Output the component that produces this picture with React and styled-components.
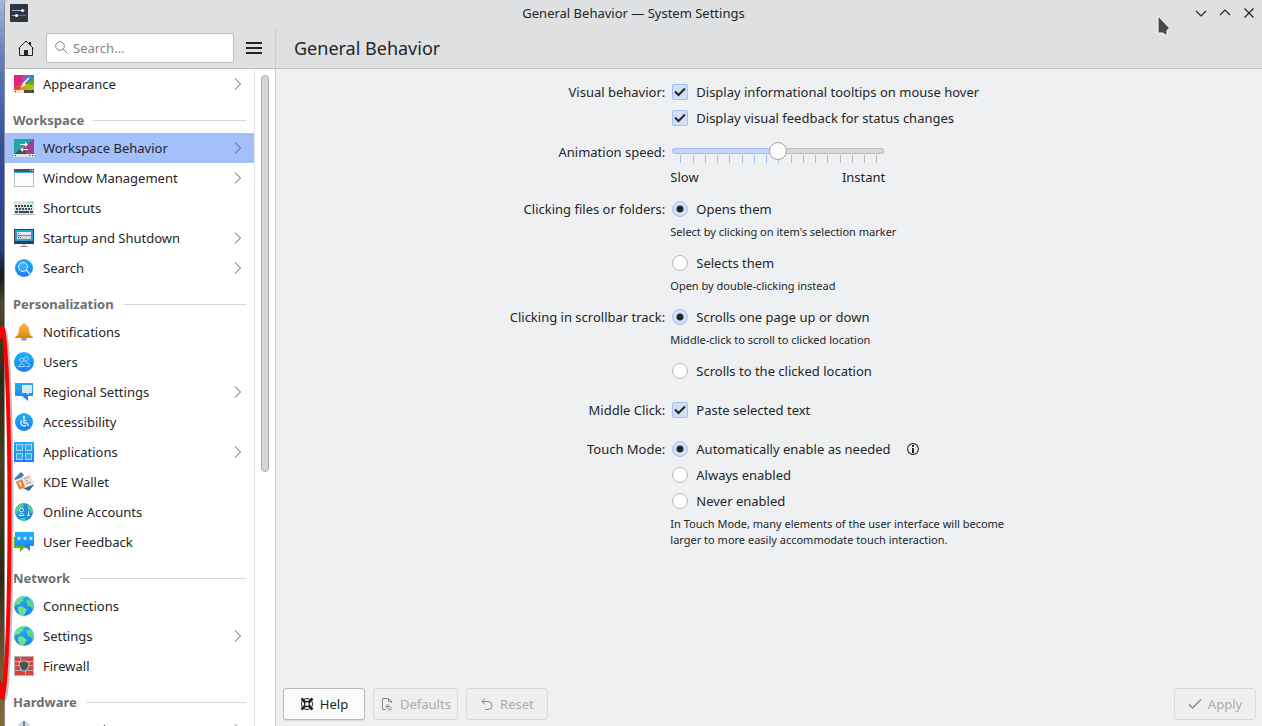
import React, { useState } from 'react'
import styled, { createGlobalStyle } from 'styled-components'

const sections = [
  {
    title: '',
    items: [{ name: 'Appearance', icon: 'appearance', arrow: true }],
  },
  {
    title: 'Workspace',
    items: [
      { name: 'Workspace Behavior', icon: 'behavior', arrow: true },
      { name: 'Window Management', icon: 'windows', arrow: true },
      { name: 'Shortcuts', icon: 'keyboard' },
      { name: 'Startup and Shutdown', icon: 'startup', arrow: true },
      { name: 'Search', icon: 'search', arrow: true },
    ],
  },
  {
    title: 'Personalization',
    items: [
      { name: 'Notifications', icon: 'bell' },
      { name: 'Users', icon: 'users' },
      { name: 'Regional Settings', icon: 'region', arrow: true },
      { name: 'Accessibility', icon: 'access' },
      { name: 'Applications', icon: 'apps', arrow: true },
      { name: 'KDE Wallet', icon: 'wallet' },
      { name: 'Online Accounts', icon: 'online' },
      { name: 'User Feedback', icon: 'feedback' },
    ],
  },
  {
    title: 'Network',
    items: [
      { name: 'Connections', icon: 'globe' },
      { name: 'Settings', icon: 'globe', arrow: true },
      { name: 'Firewall', icon: 'firewall' },
    ],
  },
  {
    title: 'Hardware',
    items: [{ name: 'Input Devices', icon: 'input', arrow: true }],
  },
]

const icons = {
  appearance: (
    <>
      <rect x="1" y="2" width="20" height="16" fill="#e8452f" />
      <path d="M1 2H11L9 10L1 14Z" fill="#e6207c" />
      <path d="M11 2H14L10 11L8 8Z" fill="#9b4fc4" />
      <path d="M14 2H21V6L11 11Z" fill="#3f86bd" />
      <path d="M21 6V12L10 12Z" fill="#4fae3a" />
      <path d="M21 12V18H13L10 11Z" fill="#b5bd10" />
      <path d="M13 18H6L10 11Z" fill="#f08a1c" />
      <path d="M16 5L11 10" stroke="#fff" strokeWidth="1.5" />
      <path d="M11 9L12.5 11C11 14 9 14 7.500 14.5C9 13 8.5 11 11 9Z" fill="#fff" />
      <rect x="1" y="17" width="10" height="3" fill="#fbe3d3" />
      <rect x="11" y="17" width="10" height="3" fill="#4a4f35" />
      <path d="M2 18h1v1H2zM19 18h1v1h-1z" fill="#222" />
    </>
  ),
  behavior: (
    <>
      <rect x="1" y="2" width="20" height="16" fill="#1fa6a8" />
      <path d="M21 2V18H13L9 12Z" fill="#b23a78" />
      <path d="M21 2L12 9L17 18H21Z" fill="#9a4585" />
      <path d="M1 18L9 10L14 18Z" fill="#2f5560" />
      <rect x="1" y="17" width="20" height="3" fill="#dfe3e5" />
      <path d="M2 18h1v1H2zM16 18h1v1h-1zM19 18h1v1h-1z" fill="#333" />
      <path d="M7 7.500H14M9 12.500H15" stroke="#fff" />
      <path d="M12 5L15 7.500L12 10ZM10 10L7 12.500L10 15Z" fill="#fff" />
    </>
  ),
  windows: (
    <>
      <rect x="1.500" y="3.500" width="19" height="16" fill="#fcfcfc" stroke="#b8bec2" />
      <rect x="1" y="2" width="20" height="3" fill="#4a5560" />
      <rect x="1" y="5" width="20" height="1" fill="#3daee9" />
      <path d="M17 3h1v1h-1zM19 3h1v1h-1z" fill="#fff" />
    </>
  ),
  keyboard: (
    <>
      <rect x="1" y="4" width="20" height="14" fill="#dfe3e5" />
      <rect x="1" y="17" width="20" height="1" fill="#a9b1b5" />
      <path d="M15 5.500h5" stroke="#2ecc71" strokeDasharray="1 1" />
      <path d="M2 9h18" stroke="#3b4750" strokeWidth="2" strokeDasharray="2 1" />
      <path d="M3 12h16" stroke="#3b4750" strokeWidth="2" strokeDasharray="2 1" />
      <path d="M2 15h3M6 15h10M17 15h3" stroke="#3b4750" strokeWidth="2" />
    </>
  ),
  startup: (
    <>
      <rect x="1" y="2" width="20" height="15" fill="#31404c" />
      <rect x="2" y="3" width="18" height="11" fill="#2d9fd9" />
      <rect x="4" y="5" width="14" height="3" fill="#e4e9ec" />
      <rect x="4" y="9" width="14" height="3" fill="#d2d9dd" />
      <path d="M5 6h1v1H5zM5 10h1v1H5zM7 10h1v1H7z" fill="#31404c" />
      <rect x="9" y="17" width="4" height="2" fill="#d3d8db" />
      <rect x="7" y="19" width="8" height="1" fill="#8f999e" />
    </>
  ),
  search: (
    <>
      <circle cx="11" cy="11" r="9" fill="url(#blue)" />
      <circle cx="10" cy="10" r="4.500" fill="#5cc0ff" fillOpacity="0.5" stroke="#d9f0ff" />
      <path d="M13 13L17 17" stroke="#e6f5ff" strokeWidth="1.3" />
    </>
  ),
  bell: (
    <>
      <circle cx="11" cy="17" r="3" fill="#9a9fa8" />
      <path d="M11 2C12 2 12.800 2.700 12.800 3.800C16 5 16 8 16.300 11C16.700 14 18 15 20 16V17H2V16C4 15 5.300 14 5.700 11C6 8 6 5 9.200 3.800C9.200 2.700 10 2 11 2Z" fill="url(#gold)" />
    </>
  ),
  users: (
    <>
      <circle cx="11" cy="11" r="10" fill="url(#blue)" />
      <g fill="none" stroke="#9fd8ff">
        <circle cx="8.500" cy="9" r="2" />
        <circle cx="13" cy="8" r="2.200" />
        <path d="M5.500 15.500C5.500 12 11.500 12 11.500 15.500ZM12.500 12C15 11 16.500 12.500 16.500 15.500H13.500" />
      </g>
    </>
  ),
  region: (
    <>
      <path d="M2 2H20V15H15V20L9 15H2Z" fill="url(#blue)" />
      <path d="M9 4H19V12H16V14L13.500 12H9Z" fill="#d6eaf8" />
    </>
  ),
  access: (
    <>
      <circle cx="11" cy="11" r="9" fill="url(#blue)" />
      <g fill="none" stroke="#fff" strokeWidth="1.2">
        <path d="M11 7V12H14L15.500 15M11 9.500H13.500" />
        <path d="M9 9.500A3 3 0 1 0 13 14.200" />
      </g>
      <circle cx="11" cy="6" r="1.100" fill="#fff" />
    </>
  ),
  apps: (
    <>
      <rect x="1" y="1" width="20" height="20" fill="url(#blue)" />
      <g fill="#3fa9ef" stroke="#9fd6fa">
        <rect x="3.500" y="3.500" width="6" height="6" />
        <rect x="12.500" y="3.500" width="6" height="6" />
        <rect x="3.500" y="12.500" width="6" height="6" />
        <rect x="12.500" y="12.500" width="6" height="6" />
      </g>
    </>
  ),
  wallet: (
    <>
      <path d="M1 8L8 1L11 4L4 11Z" fill="#3b7fbd" />
      <path d="M9 17L16 20L21 14L18 12Z" fill="#2f69a8" />
      <path d="M2 9L17 3L22 13L7 19Z" fill="#eee6dc" />
      <path d="M3 11L9 8.500L12 16L6.500 18.500Z" fill="#e0752d" />
      <path d="M5 11.500L8 10.300L9.500 15L7.500 16Z" fill="#f6c9a0" />
      <path d="M11 8L16.500 5.700M12 10.500L15 9.300M13 13L18 11" stroke="#9c958c" />
    </>
  ),
  online: (
    <>
      <circle cx="11" cy="11" r="9" fill="#1d8fe0" />
      <path d="M3 7C5 3 9 2 11 2L10 6L6 8L5 12L2.500 13C2 11 2 9 3 7ZM14 3C18 4 20 8 20 11L18 12L16 8ZM7 17L12 17L13 20C10 20.500 8 19.500 7 17Z" fill="#4fcf8d" />
      <g fill="none" stroke="#d5efff">
        <circle cx="8.500" cy="9" r="2" />
        <path d="M6 14.500C6 12 11 12 11 14.500ZM15.500 10V14M14 14.500H17M15.500 7V8" />
      </g>
    </>
  ),
  feedback: (
    <>
      <path d="M1 6H14V17H11L7 21V17H1Z" fill="#5fb919" />
      <path d="M2 1H21V15H17V20L11 15H2Z" fill="url(#blue)" />
      <path d="M6 5l.7 1.500 1.600.2-1.200 1.100.3 1.600L6 8.600l-1.400.8.3-1.600-1.200-1.100 1.600-.2zM12 5l.7 1.500 1.600.2-1.200 1.100.3 1.600L12 8.600l-1.400.8.3-1.600-1.200-1.100 1.600-.2zM18 5l.7 1.500 1.600.2-1.200 1.100.3 1.600L18 8.600l-1.400.8.3-1.600-1.200-1.100 1.600-.2z" fill="#d5eeff" />
    </>
  ),
  globe: (
    <>
      <circle cx="11" cy="11" r="10" fill="url(#blue)" />
      <path d="M2 7C4 3 8 1 12 1L13 2L9 4L11 5L7 8L6 10L4 9L1.400 12C1 10 1.300 8.500 2 7Z" fill="#6fe08f" />
      <path d="M5 12L9 11L14 15L12 18L11 20.800C8 20.600 6 19 5 16Z" fill="#6fe08f" />
      <path d="M13 6L17 3.500C19.500 6 21 8.500 21 11L20 15L18 12L15 11Z" fill="#5fd48c" />
    </>
  ),
  firewall: (
    <>
      <rect x="1" y="1" width="20" height="20" fill="#b9aeb0" />
      <path d="M2 2h5v4H2zM8 2h12v4H8zM2 7h10v3H2zM13 7h7v3h-7zM2 11h5v4H2zM8 11h12v4H8zM2 16h10v4H2zM13 16h7v4h-7z" fill="#d8433a" />
      <path d="M11 5.500C13 7 14.500 7 16 7C16 12 14.500 14.500 11 16.500C7.500 14.500 6 12 6 7C7.500 7 9 7 11 5.500Z" fill="#4c5357" stroke="#c3c8ca" />
    </>
  ),
  input: (
    <>
      <rect x="5" y="2" width="12" height="19" rx="6" fill="#d5d9dc" />
      <path d="M11 2V10" stroke="#3b6d96" strokeWidth="1.5" />
    </>
  ),
}

function Icon({ name }) {
  return (
    <svg width="22" height="22" viewBox="0 0 22 22" aria-hidden="true">
      {icons[name]}
    </svg>
  )
}

function Chevron() {
  return (
    <svg width="8" height="14" viewBox="0 0 8 14" aria-hidden="true">
      <path d="M1 1.500L6.500 7L1 12.500" fill="none" stroke="#55585a" />
    </svg>
  )
}

function Check({ label, on }) {
  const [checked, setChecked] = useState(on)
  return (
    <Choice>
      <Mark>
        <CheckInput type="checkbox" checked={checked} onChange={() => setChecked(!checked)} />
        {checked && (
          <svg width="16" height="16" viewBox="0 0 16 16" aria-hidden="true">
            <path d="M3 7.500L6.500 11L13 4.500" fill="none" stroke="#232629" strokeWidth="2" />
          </svg>
        )}
      </Mark>
      {label}
    </Choice>
  )
}

function Radio({ label, name, on }) {
  return (
    <Choice>
      <Mark>
        <RadioInput type="radio" name={name} defaultChecked={on} />
      </Mark>
      {label}
    </Choice>
  )
}

function Sidebar() {
  const [selected, setSelected] = useState('Workspace Behavior')
  return (
    <SidePanel>
      <List>
        {sections.map(({ title, items }) => (
          <React.Fragment key={title}>
            {title && <SectionTitle>{title}</SectionTitle>}
            {items.map(({ name, icon, arrow }) => (
              <Item key={name} $active={selected === name} onClick={() => setSelected(name)}>
                <Icon name={icon} />
                <span>{name}</span>
                {arrow && <Chevron />}
              </Item>
            ))}
          </React.Fragment>
        ))}
      </List>
      <ScrollTrack>
        <ScrollThumb />
      </ScrollTrack>
    </SidePanel>
  )
}

function AnimationSlider() {
  const [speed, setSpeed] = useState(8)
  return (
    <div>
      <SliderBox>
        <Ticks>
          {Array.from({ length: 17 }, (_, i) => (
            <Tick key={i} $on={i <= speed} />
          ))}
        </Ticks>
        <Slider
          id="speed"
          type="range"
          min="0"
          max="16"
          value={speed}
          style={{ '--fill': `${(speed / 16) * 100}%` }}
          onChange={(e) => setSpeed(Number(e.target.value))}
        />
      </SliderBox>
      <SliderEnds>
        <span>Slow</span>
        <span>Instant</span>
      </SliderEnds>
    </div>
  )
}

export default function App() {
  return (
    <Desktop>
      <GlobalStyle />
      <Defs width="0" height="0" aria-hidden="true">
        <linearGradient id="blue" x1="0" y1="0" x2="0" y2="1">
          <stop offset="0" stopColor="#1fb1f8" />
          <stop offset="1" stopColor="#1d7df0" />
        </linearGradient>
        <linearGradient id="gold" x1="0" y1="0" x2="0" y2="1">
          <stop offset="0" stopColor="#f7b851" />
          <stop offset="1" stopColor="#dd8a05" />
        </linearGradient>
      </Defs>
      <Window>
        <TitleBar>
          <svg width="18" height="18" viewBox="0 0 18 18" aria-hidden="true">
            <rect width="18" height="18" rx="1" fill="#2f353b" />
            <path d="M2 6.500H12" stroke="#8fb4f5" />
            <path d="M12 6.500H16M7 11.500H16" stroke="#6b7177" />
            <path d="M2 11.500H6" stroke="#8fb4f5" />
            <circle cx="12.500" cy="6.500" r="1.500" fill="#fff" />
            <circle cx="6.500" cy="11.500" r="1.500" fill="#fff" />
          </svg>
          <WindowTitle>General Behavior — System Settings</WindowTitle>
          <WindowButtons>
            <WindowButton aria-label="Minimize">
              <svg width="12" height="12" viewBox="0 0 12 12"><path d="M1 4L6 9L11 4" /></svg>
            </WindowButton>
            <WindowButton aria-label="Maximize">
              <svg width="12" height="12" viewBox="0 0 12 12"><path d="M1 8L6 3L11 8" /></svg>
            </WindowButton>
            <WindowButton aria-label="Close">
              <svg width="12" height="12" viewBox="0 0 12 12"><path d="M1.500 1.500L10.500 10.500M10.500 1.500L1.500 10.500" /></svg>
            </WindowButton>
          </WindowButtons>
        </TitleBar>
        <Header>
          <Tools>
            <ToolButton aria-label="Home">
              <svg width="16" height="16" viewBox="0 0 16 16">
                <path d="M0.500 8.500L8 1L15.500 8.500M1.500 8V15.500H14.500V8" fill="none" stroke="#232629" />
                <path d="M6 10H10V16H6ZM11 2H13V6L11 4Z" fill="#232629" />
              </svg>
            </ToolButton>
            <SearchBox>
              <svg width="13" height="13" viewBox="0 0 13 13" aria-hidden="true">
                <circle cx="5" cy="5" r="4.300" fill="none" stroke="#7c858d" />
                <path d="M8.200 8.200L12.500 12.500" stroke="#7c858d" />
              </svg>
              <input type="text" placeholder="Search..." aria-label="Search" />
            </SearchBox>
            <ToolButton aria-label="Menu">
              <svg width="16" height="16" viewBox="0 0 16 16">
                <path d="M0 3H16M0 8H16M0 13H16" stroke="#232629" strokeWidth="2" />
              </svg>
            </ToolButton>
          </Tools>
          <PageTitle>General Behavior</PageTitle>
        </Header>
        <Body>
          <Sidebar />
          <Main>
            <Form>
              <Label>Visual behavior:</Label>
              <Field>
                <Check label="Display informational tooltips on mouse hover" on />
                <Check label="Display visual feedback for status changes" on />
              </Field>

              <Label as="label" htmlFor="speed">Animation speed:</Label>
              <AnimationSlider />

              <Label>Clicking files or folders:</Label>
              <Field $loose>
                <div>
                  <Radio name="click" label="Opens them" on />
                  <Hint>Select by clicking on item's selection marker</Hint>
                </div>
                <div>
                  <Radio name="click" label="Selects them" />
                  <Hint>Open by double-clicking instead</Hint>
                </div>
              </Field>

              <Label>Clicking in scrollbar track:</Label>
              <Field $loose>
                <div>
                  <Radio name="track" label="Scrolls one page up or down" on />
                  <Hint>Middle-click to scroll to clicked location</Hint>
                </div>
                <Radio name="track" label="Scrolls to the clicked location" />
              </Field>

              <Label $spaced>Middle Click:</Label>
              <Field $spaced>
                <Check label="Paste selected text" on />
              </Field>

              <Label $spaced>Touch Mode:</Label>
              <Field $spaced>
                <InfoRow>
                  <Radio name="touch" label="Automatically enable as needed" on />
                  <svg width="12" height="12" viewBox="0 0 12 12" aria-hidden="true">
                    <circle cx="6" cy="6" r="5.400" fill="none" stroke="#232629" strokeWidth="1.1" />
                    <path d="M5 2h2v2H5zM5 5h2v5H5z" fill="#232629" />
                  </svg>
                </InfoRow>
                <Radio name="touch" label="Always enabled" />
                <div>
                  <Radio name="touch" label="Never enabled" />
                  <Hint>
                    In Touch Mode, many elements of the user interface will become larger to more
                    easily accommodate touch interaction.
                  </Hint>
                </div>
              </Field>
            </Form>
            <Footer>
              <Button>
                <svg width="14" height="14" viewBox="0 0 14 14" fill="none" stroke="#232629" aria-hidden="true">
                  <circle cx="7" cy="7" r="5.500" />
                  <circle cx="7" cy="7" r="2.500" strokeWidth="1.3" />
                  <path d="M1.500 1.500L5 5M12.500 1.500L9 5M1.500 12.500L5 9M12.500 12.500L9 9" strokeWidth="2.600" />
                </svg>
                Help
              </Button>
              <Button disabled>
                <svg width="14" height="14" viewBox="0 0 14 14" fill="none" stroke="#85888a" aria-hidden="true">
                  <path d="M6 12.500H2.500V1.500H8.500L11.500 4.500V6M8.500 1.500V4.500H11.500" />
                  <path d="M6 9.500H10A2 2 0 0 1 10 13H8M8.500 7L6 9.500L8.500 12" />
                </svg>
                Defaults
              </Button>
              <Button disabled>
                <svg width="14" height="14" viewBox="0 0 14 14" fill="none" stroke="#85888a" aria-hidden="true">
                  <path d="M5 1.500L2 4.500L5 7.500M2 4.500H8A4 4 0 0 1 8 12.500H5" />
                </svg>
                Reset
              </Button>
              <Spacer />
              <Button disabled>
                <svg width="14" height="14" viewBox="0 0 14 14" fill="none" stroke="#85888a" aria-hidden="true">
                  <path d="M1 7.500L4.500 11L13 2.500" strokeWidth="1.3" />
                </svg>
                Apply
              </Button>
            </Footer>
          </Main>
        </Body>
      </Window>
      <Scribble width="18" height="384" viewBox="0 0 18 384" aria-hidden="true">
        <path d="M-1 16C0 8 1 5 2 5C6 5 9.500 90 9.500 190C9.500 292 6 374 2 374C1 374 0 368 -1 358" fill="none" stroke="#000" strokeOpacity="0.25" strokeWidth="4" transform="translate(2 2)" />
        <path d="M-1 16C0 8 1 5 2 5C6 5 9.500 90 9.500 190C9.500 292 6 374 2 374C1 374 0 368 -1 358" fill="none" stroke="#fe0000" strokeWidth="4" />
      </Scribble>
      <Pointer width="14" height="22" viewBox="0 0 14 22" aria-hidden="true">
        <path d="M1 1V18H6L9 20.500L10 19V15.500L12.500 13Z" fill="#4a4a4a" stroke="#fff" />
      </Pointer>
    </Desktop>
  )
}

const GlobalStyle = createGlobalStyle`
* {
  box-sizing: border-box;
}
body {
  margin: 0;
  overflow: hidden;
  font-family: "Noto Sans", sans-serif;
  font-size: 13px;
  color: #232629;
}
button, input {
  margin: 0;
  font: inherit;
  color: inherit;
}
svg {
  flex: none;
  display: block;
}
`

const Desktop = styled.div`
  position: relative;
  height: 100vh;
  padding-left: 4px;
  background: linear-gradient(#9fb8dd 0, #5e7fc0 8%, #34509c 20%, #2b3f85 34%, #16181f 38%, #4f4a2c 42%, #2d2812 52%, #4a3f1a 64%, #2e2810 80%, #6d5230 90%, #8a6b35 100%);
`

const Defs = styled.svg`
  position: absolute;
`

const Window = styled.div`
  display: flex;
  flex-direction: column;
  height: 100%;
  border-left: 1px solid #8d9093;
  border-top-left-radius: 4px;
  background: #eff0f1;
  overflow: hidden;
`

const TitleBar = styled.header`
  display: grid;
  grid-template-columns: 1fr auto 1fr;
  align-items: center;
  height: 26px;
  padding: 0 5px;
  background: #dee0e2;
`

const WindowTitle = styled.span`
  line-height: 18px;
`

const WindowButtons = styled.div`
  display: flex;
  justify-content: flex-end;
  gap: 8px;
`

const WindowButton = styled.button`
  display: grid;
  place-items: center;
  width: 16px;
  height: 16px;
  padding: 0;
  border: 0;
  background: none;
  path {
    fill: none;
    stroke: #232629;
    stroke-width: 1.2;
  }
`

const Header = styled.div`
  display: flex;
  height: 43px;
  padding-top: 1px;
  background: #dee0e2;
  border-bottom: 1px solid #bec0c2;
`

const Tools = styled.div`
  display: flex;
  align-items: center;
  gap: 12px;
  width: 271px;
  padding: 0 13px;
  border-right: 1px solid #cbcdcf;
`

const ToolButton = styled.button`
  padding: 0;
  border: 0;
  background: none;
`

const SearchBox = styled.div`
  flex: 1;
  display: flex;
  align-items: center;
  gap: 5px;
  min-width: 0;
  height: 30px;
  padding: 0 8px;
  border: 1px solid #bbbdbf;
  border-radius: 3px;
  background: #fff;
  input {
    flex: 1;
    min-width: 0;
    padding: 0;
    border: 0;
    outline: 0;
    background: none;
    &::placeholder {
      color: #7c858d;
    }
  }
`

const PageTitle = styled.h1`
  margin: 0;
  padding: 0 18px;
  font-size: 18px;
  font-weight: 400;
  line-height: 43px;
`

const Body = styled.div`
  flex: 1;
  display: flex;
  min-height: 0;
`

const SidePanel = styled.aside`
  display: flex;
  width: 271px;
  background: #fff;
  border-right: 1px solid #cbcdcf;
`

const List = styled.nav`
  flex: 1;
  overflow: hidden;
  border-right: 1px solid #e3e5e7;
`

const SectionTitle = styled.h2`
  display: flex;
  align-items: center;
  gap: 9px;
  height: 34px;
  margin: 0;
  padding: 8px 8px 0;
  font-size: 13px;
  font-weight: 700;
  color: #6d6f71;
  &::after {
    content: "";
    flex: 1;
    height: 1px;
    background: #d6d8d9;
  }
`

const Item = styled.button`
  display: flex;
  align-items: center;
  gap: 8px;
  width: 100%;
  height: 30px;
  padding: 0 12px 0 8px;
  border: 0;
  background: ${({ $active }) => ($active ? '#a3bffc' : 'none')};
  text-align: left;
  span {
    flex: 1;
  }
`

const ScrollTrack = styled.div`
  width: 20px;
  padding: 6px 6px 0;
`

const ScrollThumb = styled.div`
  height: 397px;
  width: 8px;
  border: 1px solid #a9abac;
  border-radius: 4px;
  background: #d5d7d7;
`

const Main = styled.main`
  flex: 1;
  display: flex;
  flex-direction: column;
  justify-content: space-between;
`

const Form = styled.form`
  display: grid;
  grid-template-columns: auto minmax(0, 358px);
  justify-content: center;
  gap: 12px 5px;
  padding-top: 12px;
`

const Label = styled.span`
  padding-top: ${({ $spaced }) => ($spaced ? '5px' : '0')};
  line-height: 22px;
  text-align: right;
`

const Field = styled.div`
  display: flex;
  flex-direction: column;
  gap: ${({ $loose }) => ($loose ? '12px' : '4px')};
  padding-top: ${({ $spaced }) => ($spaced ? '5px' : '0')};
`

const Choice = styled.label`
  display: flex;
  align-items: center;
  gap: 8px;
  height: 22px;
  padding-left: 2px;
`

const Mark = styled.span`
  display: grid;
  > * {
    grid-area: 1 / 1;
  }
  svg {
    pointer-events: none;
  }
`

const CheckInput = styled.input`
  appearance: none;
  width: 16px;
  height: 16px;
  border: 1px solid #b6b8ba;
  border-radius: 2px;
  background: #fff;
  &:checked {
    border-color: #a3bffc;
    background: #d5dff4;
  }
`

const RadioInput = styled(CheckInput)`
  border-radius: 50%;
  &:checked {
    background: radial-gradient(circle, #232629 0 3px, #d5dff4 4px);
  }
`

const Hint = styled.p`
  margin: 4px 0 0;
  font-size: 11px;
  line-height: 16px;
`

const InfoRow = styled.div`
  display: flex;
  align-items: center;
  gap: 16px;
`

const SliderBox = styled.div`
  display: grid;
  width: 212px;
  height: 22px;
  margin-left: 2px;
  > * {
    grid-area: 1 / 1;
  }
`

const Slider = styled.input`
  appearance: none;
  width: 100%;
  height: 20px;
  background: none;
  &::-webkit-slider-runnable-track {
    height: 6px;
    border: 1px solid #b9bbbd;
    border-radius: 3px;
    background:
      linear-gradient(90deg, #c5d5f7 var(--fill), #d6d8d9 var(--fill)) padding-box,
      linear-gradient(90deg, #a3bffc var(--fill), #b9bbbd var(--fill)) border-box;
    border-color: transparent;
  }
  &::-webkit-slider-thumb {
    appearance: none;
    width: 18px;
    height: 18px;
    margin-top: -7px;
    border: 1px solid #a2a4a6;
    border-radius: 50%;
    background: #fcfcfc;
  }
`

const Ticks = styled.div`
  display: flex;
  justify-content: space-between;
  align-items: flex-end;
  padding: 0 7px 0 8px;
`

const Tick = styled.span`
  width: 1px;
  height: 8px;
  background: ${({ $on }) => ($on ? '#a3bffc' : '#bbbdbf')};
`

const SliderEnds = styled.div`
  display: flex;
  justify-content: space-between;
  width: 215px;
  margin-top: 5px;
  line-height: 18px;
`

const Footer = styled.footer`
  display: flex;
  gap: 8px;
  padding: 0 6px 6px 7px;
`

const Button = styled.button`
  display: flex;
  align-items: center;
  justify-content: center;
  gap: 6px;
  min-width: 82px;
  height: 32px;
  padding: 0 6px;
  border: 1px solid #b6b8ba;
  border-radius: 3px;
  background: #fcfcfc;
  box-shadow: 0 1px 1px rgba(0, 0, 0, 0.1);
  &:disabled {
    border-color: #d8dadb;
    background: #efefef;
    color: #a9abad;
    box-shadow: none;
  }
`

const Spacer = styled.div`
  flex: 1;
`

const Scribble = styled.svg`
  position: absolute;
  left: 0;
  top: 323px;
  pointer-events: none;
`

const Pointer = styled.svg`
  position: absolute;
  right: 91px;
  top: 15px;
  pointer-events: none;
`
